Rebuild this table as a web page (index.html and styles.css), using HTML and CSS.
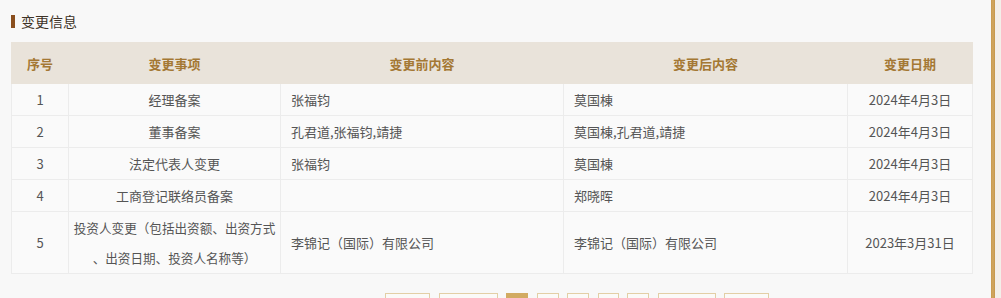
FILE: index.html
```html
<!DOCTYPE html>
<html lang="zh">
<head>
<meta charset="utf-8">
<link rel="stylesheet" href="styles.css">
</head>
<body>
<div class="page">
  <div class="main">
    <h2 class="title"><span class="mark"></span>变更信息</h2>
    <table class="grid">
      <colgroup>
        <col class="c1"><col class="c2"><col class="c3"><col class="c4"><col class="c5">
      </colgroup>
      <thead>
        <tr><th>序号</th><th>变更事项</th><th>变更前内容</th><th>变更后内容</th><th>变更日期</th></tr>
      </thead>
      <tbody>
        <tr><td class="ctr">1</td><td class="ctr">经理备案</td><td>张福钧</td><td>莫国棟</td><td class="ctr">2024年4月3日</td></tr>
        <tr><td class="ctr">2</td><td class="ctr">董事备案</td><td>孔君道,张福钧,靖捷</td><td>莫国棟,孔君道,靖捷</td><td class="ctr">2024年4月3日</td></tr>
        <tr><td class="ctr">3</td><td class="ctr">法定代表人变更</td><td>张福钧</td><td>莫国棟</td><td class="ctr">2024年4月3日</td></tr>
        <tr><td class="ctr">4</td><td class="ctr">工商登记联络员备案</td><td></td><td>郑晓晖</td><td class="ctr">2024年4月3日</td></tr>
        <tr class="tall"><td class="ctr">5</td><td class="ctr wrap">投资人变更（包括出资额、出资方式<br>、出资日期、投资人名称等）</td><td>李锦记（国际）有限公司</td><td>李锦记（国际）有限公司</td><td class="ctr">2023年3月31日</td></tr>
      </tbody>
    </table>
    <div class="pager">
      <span class="pg w45">首页</span>
      <span class="pg w59">上一页</span>
      <span class="pg w22 on">1</span>
      <span class="pg w22">2</span>
      <span class="pg w22">3</span>
      <span class="pg w21">4</span>
      <span class="pg w22">5</span>
      <span class="pg w58">下一页</span>
      <span class="pg w45">尾页</span>
    </div>
  </div>
  <div class="edge"></div>
  <div class="rest"></div>
</div>
</body>
</html>
```
FILE: styles.css
```css
* { box-sizing: border-box; }
html, body { margin: 0; padding: 0; }
body {
  background: #f8f8f8;
  font-family: "Noto Sans CJK SC", "Noto Sans", sans-serif;
  overflow: hidden;
  height: 298px;
}
.page {
  display: flex;
  height: 298px;
}
.main {
  flex: 0 0 991px;
  padding: 0 0 0 11px;
  background: #f8f8f8;
}
.edge {
  flex: 0 0 4px;
  background: linear-gradient(to right, #c89a4e, #d2a862, #c4964a);
}
.rest {
  flex: 1;
  background: #f3efe9;
}
.title {
  margin: 0;
  height: 42px;
  display: flex;
  align-items: flex-start;
  padding-top: 11px;
  font-size: 14px;
  font-weight: normal;
  color: #3d3226;
  line-height: 20px;
}
.mark {
  display: inline-block;
  width: 4px;
  height: 13px;
  background: #8a4f1e;
  margin: 4px 6px 0 0;
}
.grid {
  width: 961px;
  table-layout: fixed;
  border-collapse: collapse;
  font-size: 13px;
  color: #555;
}
.c1 { width: 57px; }
.c2 { width: 212px; }
.c3 { width: 283px; }
.c4 { width: 284px; }
.c5 { width: 125px; }
.grid th {
  height: 41px;
  background: #e9e3da;
  color: #a47834;
  font-weight: bold;
  font-size: 13px;
  border: 1px solid #e9e3da;
  border-left: 1px solid #f3efe9;
  padding: 0;
}
.grid th:first-child { border-left-color: #e9e3da; }
.grid td {
  height: 32px;
  background: #fafafa;
  border: 1px solid #ececec;
  padding: 0 10px;
  text-align: left;
  vertical-align: middle;
  line-height: 18px;
}
.grid td.ctr { text-align: center; }
.grid tr.tall td { height: 62px; }
.grid td.wrap { line-height: 30px; padding: 0; white-space: nowrap; font-size: 12.6px; }
.pager {
  display: flex;
  gap: 8.5px;
  padding: 19px 0 0 374px;
}
.pg {
  height: 36px;
  border: 1px solid #e3cfa6;
  background: #fbfaf8;
  font-size: 12px;
  color: #8a6a3a;
  display: flex;
  align-items: flex-end;
  justify-content: center;
  padding-bottom: 2px;
}
.pg.on { background: #d2ab62; border-color: #d2ab62; color: #fff; }
.w45 { width: 45px; }
.w59 { width: 59px; }
.w58 { width: 58px; }
.w22 { width: 22px; }
.w21 { width: 21px; }
```
